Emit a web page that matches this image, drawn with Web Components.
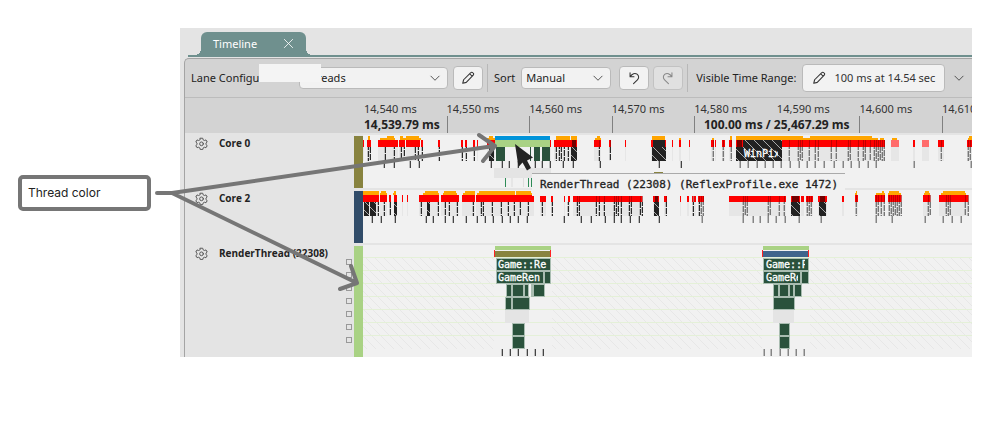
<!DOCTYPE html>
<html lang="en">
<head>
<meta charset="utf-8">
<title>Timeline</title>
<style>
  body { margin: 0; background: #fff; color: #222; font: 11px/16px "Noto Sans", "Open Sans", sans-serif; }
</style>
</head>
<body>
<timeline-figure>
  <call-out slot="note">Thread color</call-out>
  <timeline-panel></timeline-panel>
</timeline-figure>

<script>
const define = (name, html, setup) => {
  const t = document.createElement('template');
  t.innerHTML = html;
  customElements.define(name, class extends HTMLElement {
    constructor() {
      super();
      this.attachShadow({ mode: 'open' }).append(t.content.cloneNode(true));
    }
    connectedCallback() { if (setup) setup(this, this.shadowRoot); }
  });
};

/* ---- icons ---- */
const ICONS = {
  pencil: '<path d="M2 14l1-4 8.200-8.200a1.500 1.500 0 0 1 2.200 0l.6.6a1.500 1.500 0 0 1 0 2.200L6 13z M10 3.200l2.800 2.800"/>',
  undo: '<path d="M3.500 2v4.500H8 M3.800 6.200C6 3 9 1.800 11.500 3.600c2.500 1.900 2.200 4.700.4 6.500L7.500 14.500"/>',
  redo: '<path d="M12.500 2v4.500H8 M12.200 6.200C10 3 7 1.800 4.500 3.600c-2.500 1.900-2.200 4.700-.4 6.500L8.500 14.500"/>',
  chevron: '<path d="M2.500 5.500L8 11l5.500-5.500"/>',
  close: '<path d="M2 2l12 12M14 2L2 14"/>',
  gear: '<path d="M6.500 1.500h3l.5 2 1.500.8 2-.7 1.500 2.600-1.500 1.300v1.800l1.500 1.300-1.500 2.600-2-.6-1.500.9-.5 2h-3l-.5-2-1.500-.9-2 .6L1 10.600l1.500-1.300V7.500L1 6.200l1.500-2.600 2 .7L6 3.500z"/><circle cx="8" cy="8.400" r="2.300"/>'
};
define('ui-icon', `<style>
  :host { display: block; flex: none; width: var(--size, 14px); height: var(--size, 14px); }
  svg { display: block; width: 100%; height: 100%; fill: none; stroke: currentColor; stroke-width: 1.200; stroke-linejoin: round; stroke-linecap: round; }
</style><svg viewBox="0 0 16 16" aria-hidden="true"></svg>`,
  (el, root) => { root.querySelector('svg').innerHTML = ICONS[el.getAttribute('name')]; });

/* ---- controls ---- */
define('tool-button', `<style>
  :host { display: block; flex: none; }
  button { display: flex; align-items: center; justify-content: center; gap: 8px; box-sizing: border-box; height: var(--h, 24px); min-width: 30px;
    margin: 0; padding: 0 var(--pad, 0px); border: 1px solid #bababa; border-radius: 4px; background: #f2f2f2; color: #333; font: inherit; white-space: nowrap; }
  button:disabled { background: #e0e0e0; color: #888; border-color: #c2c2c2; }
</style><button type="button"><slot></slot></button>`,
  (el, root) => {
    const b = root.querySelector('button');
    b.disabled = el.hasAttribute('off');
    if (el.hasAttribute('label')) b.setAttribute('aria-label', el.getAttribute('label'));
  });

define('drop-down', `<style>
  :host { display: flex; align-items: center; flex: none; }
  .box { position: relative; width: var(--w); }
  label { margin-right: 6px; white-space: nowrap; width: var(--lw, auto); }
  select { appearance: none; display: block; box-sizing: border-box; width: 100%; height: 22px; margin: 0; padding: 0 20px 0 4px;
    border: 1px solid #bababa; border-radius: 4px; background: #f2f2f2; color: #222; font: inherit; }
  ui-icon { --size: 12px; position: absolute; right: 7px; top: 5px; pointer-events: none; color: #444; }
</style><label for="s"></label><div class="box"><select id="s"><option></option></select><ui-icon name="chevron"></ui-icon></div>`,
  (el, root) => {
    root.querySelector('label').textContent = el.getAttribute('label');
    root.querySelector('option').textContent = el.getAttribute('value');
  });

define('tool-bar', `<style>
  :host { display: flex; align-items: center; position: relative; height: 38px; padding-left: 6px; border-bottom: 1px solid #bcbcbc; }
  .gap { width: 1px; height: 28px; background: #b8b8b8; flex: none; margin: 0 6px 0 4px; }
  .wide { margin: 0 8px 0 4px; }
  .lane { --w: 149px; --lw: 102px; margin-right: 5px; }
  .sort { --w: 90px; margin-right: 8px; }
  .undo { margin-right: 4px; }
  .range { --h: 28px; --pad: 9px; margin: 0 8px 0 6px; }
  .label { white-space: nowrap; }
  .more { padding: 0; border: 0; background: none; color: #444; }
  .more ui-icon { --size: 12px; }
  .patch { position: absolute; left: 74px; top: 5px; width: 62px; height: 18px; background: #f4f4f4; }
</style>
<drop-down class="lane" label="Lane Configuration:" value="Threads"></drop-down>
<tool-button label="Edit configuration"><ui-icon name="pencil"></ui-icon></tool-button>
<div class="gap"></div>
<drop-down class="sort" label="Sort" value="Manual"></drop-down>
<tool-button class="undo" label="Undo"><ui-icon name="undo"></ui-icon></tool-button>
<tool-button off label="Redo"><ui-icon name="redo"></ui-icon></tool-button>
<div class="gap wide"></div>
<span class="label">Visible Time Range:</span>
<tool-button class="range"><ui-icon name="pencil"></ui-icon><span>100 ms at 14.54 sec</span></tool-button>
<button class="more" type="button" aria-label="More"><ui-icon name="chevron"></ui-icon></button>
<div class="patch"></div>`);

/* ---- ruler ---- */
define('time-ruler', `<style>
  :host { display: block; position: relative; height: 35px; padding-left: 179px; overflow: hidden; }
  .marks { display: grid; grid-template-columns: repeat(7, 1fr) 30px; height: 100%; }
  .marks span { padding-top: 3px; white-space: nowrap; background: linear-gradient(#808080, #808080) 0 18px / 1px 17px no-repeat; color: #333; }
  .marks .bare { background: none; }
  b { position: absolute; top: 19px; font: bold 12px/16px "Open Sans", sans-serif; white-space: nowrap; }
  .start { left: 179px; }
  .total { left: 519px; }
</style><div class="marks"></div><b class="start">14,539.79 ms</b><b class="total">100.00 ms / 25,467.29 ms</b>`,
  (el, root) => {
    root.querySelector('.marks').innerHTML = [540, 550, 560, 570, 580, 590, 600, 610]
      .map(n => `<span class="${n === 540 || n === 590 ? 'bare' : ''}">14,${n} ms</span>`).join('');
  });

/* ---- charts ---- */
const X0 = 363;
const pairs = s => s.trim().split(/\s+/).map(p => p.split('-').map(Number));
const rect = (a, b, y, h, fill, extra = '') => `<rect x="${a - X0}" y="${y}" width="${b - a}" height="${h}" fill="${fill}" ${extra}/>`;
const CORES = {
  core0: {
    red: '363-364 367-371 378-398 399-405 406-420 421-423 438-440 461-463 465-467 473-475 477-478 487-495 550-551 554-577 594-601 609-611 625-626 651-666 672-673 679-681 689-690 711-714 715-716 722-725 729-732 736-885 891-899 913-915 922-929 938-944 967-972',
    orange: '368-370 387-394 400-403 406-419 489-493 556-570 571-577 597-600 652-665 730-732 736-800 800-803 810-872 969-972',
    low: '380-395 400-421 487-495 595-601 679-681 712-714 800-878 880-884 892-897 968-972',
    black: '489-494 571-577 652-666 736-743',
    dash: '368 370 385 394 401 404 415 418 422 439 462 466 474 556 559 561 564 568 599 610 713 723 731 789 798 800 802 809 815 818 831 836 848 850 858 863 865 870 874 876 878 880 882 884 941 968 970',
    tick: '384 394 410 419 491 502 509 518 526 535 542 550 563 573 600 659 681 740 748 757 765 773 781 790 799 807 815 824 834 843 851 859 868 876 914 971'
  },
  core2: {
    red: '363-379 380-387 389-391 394-397 402-403 407-408 419-439 441-459 462-475 476-534 540-546 551-553 564-565 568-570 573-642 653-659 664-667 680-681 687-689 692-693 694-696 698-704 729-786 791-800 801-804 806-813 818-827 842-844 855-858 875-885 888-901 923-930 939-968',
    orange: '363-379 381-386 394-396 425-438 444-456 465-475 479-515 516-531 856-857 882-884 889-899 925-929 943-965',
    low: '380-387 393-396 423-439 443-457 463-475 477-515 516-532 855-857 876-885 888-901 924-930 941-966',
    black: '364-369 370-376 394-397 427-430 654-659 791-800 819-826',
    dash: '378 384 390 421 438 445 449 457 473 481 483 492 501 508 514 520 528 542 552 568 577 579 596 599 604 614 616 618 621 629 631 640 642 666 693 699 701 703 743 745 747 768 770 779 784 807 809 811 856 876 878 881 884 889 891 893 895 897 899 901 928 930 946 948 950 965 968',
    tick: '372 381 395 426 433 445 453 466 477 485 493 502 510 518 527 564 581 591 605 614 621 630 639 659 702 743 753 760 768 776 785 799 821 876 892 925 943 952 961'
  }
};
const ink = x => x > 700 ? '#858585' : '#444';
const bar = (x, y, h, w, color, extra) => `<path d="M${x - X0} ${y}v${h}" stroke="${color}" stroke-width="${w}" transform="translate(.5)" ${extra}/>`;
/* each mark is a dark pixel with a pale one beside it */
const vline = (x, y, h, extra = '', dark = ink(x)) => bar(x - 1, y, h, 1, '#bbb', extra) + bar(x, y, h, 1, dark, extra);

function coreSvg(name) {
  const c = CORES[name];
  let s = '<defs><pattern id="h" width="9" height="9" patternUnits="userSpaceOnUse"><path d="M-1 -1L10 10" stroke="#aaa" stroke-width="1"/></pattern></defs>';
  for (const [a, b] of pairs(c.red)) s += rect(a, b, 11, 14, '#e6e6e6');
  for (const [a, b] of pairs(c.low)) s += rect(a, b, 2, 2, '#ffa500');
  for (const [a, b] of pairs(c.orange)) s += rect(a, b, 0, 4, '#ffa500');
  for (const [a, b] of pairs(c.red)) s += rect(a, b, 4, 7, a === 891 || a === 922 ? '#ff6b6b' : '#f00');
  for (const x of c.dash.split(' ').map(Number)) {
    s += vline(x, 11, 14, `stroke-dasharray="6 1" stroke-dashoffset="${x % 5}"`, x > 700 ? '#777' : '#2a2a2a');
    if (x > 570) s += rect(x, x + 1, 4, 7, '#900', 'opacity=".6"');
  }
  for (const [a, b] of pairs(c.black)) {
    s += rect(a, b, 11, 14, '#222') + rect(a, b, 11, 14, 'url(#h)');
    if (a > 570) s += rect(a + 1, b - 1, 4, 7, '#400', 'opacity=".75"');
  }
  for (const x of c.tick.split(' ').map(Number)) s += vline(x, 25, 7);
  if (name === 'core0') {
    s += rect(653, 665, 4, 7, '#222') + rect(743, 782, 4, 21, '#222') + rect(743, 782, 4, 21, 'url(#h)')
      + rect(495, 550, 0, 4, '#0093d9') + rect(495, 550, 4, 7, '#a9d284')
      + rect(496, 505, 11, 14, '#2a523c') + rect(530, 531, 11, 14, '#2a523c') + rect(534, 540, 11, 14, '#2a523c') + rect(542, 550, 11, 14, '#2a523c')
      + rect(494, 551, 32, 10, '#e4e4e4')
      + rect(505, 506, 42, 9, '#2e8b57') + rect(511, 513, 42, 9, '#e6e6e6') + rect(523, 524, 42, 9, '#ddd') + rect(528, 529, 42, 9, '#2e8b57') + rect(531, 532, 42, 9, '#2e8b57')
      + rect(654, 663, 36, 1, '#88833f')
      + '<svg x="380" y="8" width="35" height="17"><text x="1" y="13" class="t">WinPix</text></svg>';
  }
  return s;
}

function renderSvg() {
  const box = (a, b, row) => rect(a, b, 12 + row * 13, 12, '#2a523c', 'stroke="#a9bdb1" stroke-width="1" transform="translate(.5 .5)"');
  let s = '<defs><pattern id="h" width="9" height="9" patternUnits="userSpaceOnUse"><path d="M-1 -1L10 10" stroke="#e7e7e7" stroke-width="1"/></pattern></defs>';
  s += '<rect y="11" width="100%" height="92" fill="url(#h)"/>' + rect(494, 552, 11, 92, '#f1f1f1') + rect(762, 810, 11, 92, '#f1f1f1');
  for (let i = 0; i < 7; i++) s += `<rect y="${11 + i * 13}" width="100%" height="1" fill="#e4f0d8"/>`;
  const group = (a, b, tone, rows, gray, ticks, words) => {
    s += rect(a, b, 0, 4, '#a9d284') + rect(a, b, 5, 6, tone) + rect(a - 1, a, 4, 7, '#f22') + rect(b - 1, b, 4, 7, '#f22');
    s += rect(gray[0], gray[1], 64, 13, '#e4e4e4');
    rows.forEach((r, i) => { if (r) for (const [p, q] of pairs(r)) s += box(p, q, i); });
    words.forEach(([w, width], i) => { s += `<svg x="${a - X0 + 1}" y="${12 + i * 13}" width="${width}" height="12"><text x="2" y="10" class="t">${w}</text></svg>`; });
    for (const x of ticks) s += vline(x, 103, 7);
  };
  group(495, 551, '#88833f', ['496-550', '496-543 544-550', '506-511 512-523 524-528 531-532 533-544', '505-511 512-529 532-532', '', '512-524', '512-524'],
    [505, 529], [502, 510, 518, 527, 535, 543], [['Game::Re', 52], ['GameRen', 46]]);
  group(763, 809, '#40648c', ['763-808', '763-800 801-808', '773-778 779-788 789-793 794-801', '773-794', '', '779-789', '779-789'],
    [773, 794], [764, 771, 780, 788, 796, 804], [['Game::Re', 41], ['GameRen', 34]]);
  return s;
}

define('event-chart', `<style>
  :host { display: block; min-width: 0; overflow: hidden; }
  svg { display: block; shape-rendering: crispEdges; }
  .t { font: 10px "DejaVu Sans Mono", monospace; fill: #fff; stroke: #fff; stroke-width: .3; }
</style><svg width="100%"></svg>`,
  (el, root) => {
    const svg = root.querySelector('svg'), kind = el.getAttribute('kind');
    svg.setAttribute('height', kind === 'render' ? 111 : 52);
    svg.innerHTML = kind === 'render' ? renderSvg() : coreSvg(kind);
  });

define('timeline-lane', `<style>
  :host { display: grid; grid-template-columns: 169px 9px 1fr; background: linear-gradient(90deg, #e4e4e4 178px, #f1f1f1 178px); padding-top: 1px; border-top: 2px solid #e4e4e4; }
  .head { display: flex; align-items: start; padding-left: 10px; }
  button { padding: 1px 0 0; border: 0; background: none; color: #555; }
  button ui-icon { --size: 13px; }
  b { flex: 1; margin-left: 11px; font: bold 10px/14px "Open Sans", sans-serif; white-space: nowrap; }
  .checks { display: flex; flex-direction: column; gap: 7px; padding: 13px 2px 0 0; }
  input { appearance: none; box-sizing: border-box; width: 6px; height: 6px; margin: 0; border: 1px solid #999; }
</style>
<div class="head"><button type="button" aria-label="Lane settings"><ui-icon name="gear"></ui-icon></button><b><slot></slot></b><div class="checks"></div></div>
<div class="bar"></div>`,
  (el, root) => {
    root.querySelector('.checks').innerHTML = Array.from({ length: +el.getAttribute('rows') || 0 }, (_, i) => `<input type="checkbox" aria-label="Row ${i + 1}">`).join('');
    root.querySelector('.bar').style.background = el.getAttribute('tone');
    const chart = document.createElement('event-chart');
    chart.setAttribute('kind', el.getAttribute('kind'));
    root.append(chart);
  });

/* ---- tab strip and panel ---- */
define('tab-strip', `<style>
  :host { display: flex; align-items: end; height: 29px; margin-left: 8px; padding-left: 13px; box-sizing: border-box; border-bottom: 2px solid #6f908e; }
  .tab { position: relative; display: flex; align-items: center; justify-content: space-between; box-sizing: border-box; width: 105px; height: 23px; padding: 0 12px; border-radius: 6px 6px 0 0; background: #6f908e; color: #fff; }
  .tab::before, .tab::after { content: ""; position: absolute; bottom: 0; width: 6px; height: 6px; }
  .tab::before { right: 100%; background: radial-gradient(circle at 0 0, transparent 6px, #6f908e 6px); }
  .tab::after { left: 100%; background: radial-gradient(circle at 100% 0, transparent 6px, #6f908e 6px); }
  button { padding: 0; border: 0; background: none; color: #fff; }
  ui-icon { --size: 11px; }
</style><div class="tab"><span>Timeline</span><button type="button" aria-label="Close"><ui-icon name="close"></ui-icon></button></div>`);

define('timeline-panel', `<style>
  :host { display: block; position: relative; background: #e4e4e4; overflow: hidden; }
  .body { margin: 1px 0 0 4px; border: 1px solid #a4a4a4; border-width: 1px 0 0 1px; border-radius: 5px 0 0 0; background: #d3d3d3; }
  .tip { position: absolute; left: 352px; top: 145px; box-sizing: border-box; width: 313px; height: 23px; padding-left: 8px; border-top: 1px solid #aaa; background: #f1f1f1; font: 11px/22px "DejaVu Sans Mono", monospace; -webkit-text-stroke: 0.3px #222; white-space: nowrap; }
</style>
<tab-strip></tab-strip>
<div class="body">
  <tool-bar></tool-bar>
  <time-ruler></time-ruler>
  <timeline-lane kind="core0" tone="#88833f">Core 0</timeline-lane>
  <timeline-lane kind="core2" tone="#314c69">Core 2</timeline-lane>
  <timeline-lane kind="render" tone="#a9d284" rows="7">RenderThread (22308)</timeline-lane>
</div>
<div class="tip" role="tooltip">RenderThread (22308) (ReflexProfile.exe 1472)</div>`);

/* ---- annotated figure ---- */
define('call-out', `<style>
  :host { display: block; box-sizing: border-box; margin: 147px 29px 0 18px; height: 36px; padding-left: 6px; border: 4px solid #767676; border-radius: 5px; font: 12px/27px Inter, sans-serif; color: #222; }
</style><slot></slot>`);

define('timeline-figure', `<style>
  :host { display: grid; grid-template-columns: 180px 1fr; position: relative; padding: 28px 32px 69px 0; }
  svg { position: absolute; left: 0; top: 0; pointer-events: none; }
</style>
<slot name="note"></slot><slot></slot>
<svg width="560" height="300" fill="none" stroke="#767676" stroke-width="4" stroke-linecap="round" stroke-linejoin="round" aria-hidden="true">
  <path d="M157 193H172L494 146M479 135L495 146L483 161M172 193L357 283M351 266L357 283L340 289"/>
  <path d="M515 144l3.500 23 4-4.500 4.500 8 4-2.500-4-7.500 6-3z" fill="#222" stroke="none"/>
</svg>`);
</script>
</body>
</html>
